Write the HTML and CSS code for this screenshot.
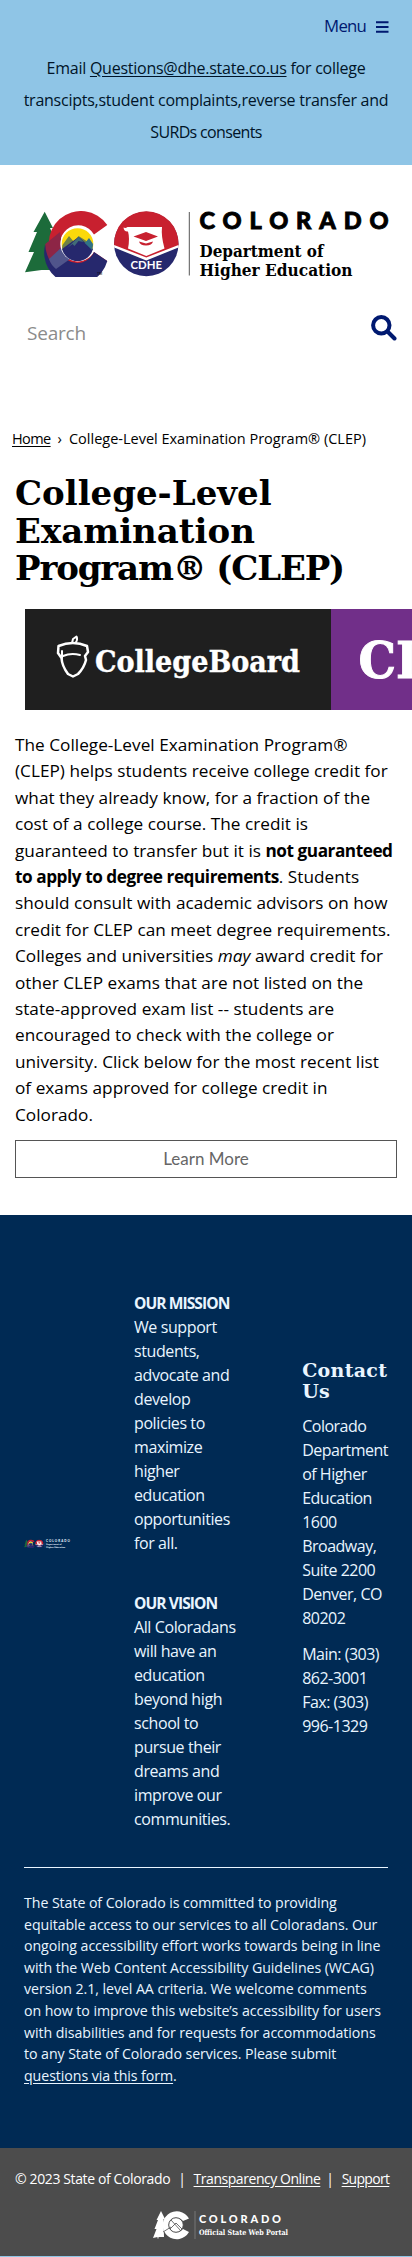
FILE: index.html
```html
<!DOCTYPE html>
<html lang="en">
<head>
<meta charset="utf-8">
<meta name="viewport" content="width=device-width, initial-scale=1">
<title>College-Level Examination Program® (CLEP)</title>
<link rel="stylesheet" href="styles.css">
</head>
<body>
<header class="notice">
  <div class="menu">Menu
    <svg width="13" height="12" viewBox="0 0 13 12"><path d="M0 1.3h12.5M0 6h12.5M0 10.7h12.5" stroke="#001970" stroke-width="2"/></svg>
  </div>
  <p class="notice-text">Email <a href="#">Questions@dhe.state.co.us</a> for college<br>transcipts,student complaints,reverse transfer and<br><span class="narrow">SURDs consents</span></p>
</header>

<section class="brand">
  <svg class="logo" width="366" height="70" viewBox="0 0 366 70">
    <defs>
      <symbol id="marks" viewBox="0 0 156 66">
        <path d="M20.7 .8 29 17l-3 0 8 18-3 2 6 22-19.500 0 0 3H17.500v-3L1 61.300 10 41H4.500L13 21H9.500z" fill="#1c6b3a"/>
        <path d="M83.300 14A32 32 0 1 0 83.300 50L70 41A18 18 0 1 1 70 23.500z" fill="#c8202f"/>
        <path d="M21.300 33A32 32 0 0 0 83.300 50L70 41A18 18 0 0 1 35.500 35L25 47z" fill="#26286d"/>
        <path d="M21.300 33 36 21 40 45 28 53Q21 43 21.300 33z" fill="#8d2546"/>
        <path d="M25 48 38 36 46 48 32 58Q27 54 25 48z" fill="#50558b"/>
        <circle cx="53.500" cy="33" r="17.200" fill="#fff"/>
        <circle cx="53.500" cy="33" r="15.800" fill="#fbd90b"/>
        <path d="M38.500 34 45 25 50 31 54.500 25 69 34A16 16 0 0 1 38 37z" fill="#6d8145"/>
        <path d="M38 38 54.500 26 69 38A16 16 0 0 1 38 38z" fill="#26286d"/>
        <path d="M54.500 26 61 32 65 27 69 33 68 39z" fill="#317287"/>
        <path d="m43 37 11.500-11 5 5-5-1-4 5-2-2z" fill="#416c78"/>
        <circle cx="122.300" cy="33" r="32.200" fill="#26286d"/>
        <path d="M90.200 35A32.200 32.200 0 1 1 154.400 35L122.300 48.500z" fill="#c8202f"/>
        <path d="M90.100 34 122.300 46.500 154.500 34 154.400 36.500 122.300 49.500 90.200 36.500z" fill="#fff"/>
        <path d="M99.500 16.500q2 1 4-.5h34.500q-1 9 2.500 21.500L122.300 45 104 37.500q2-10 0-17-4 .5-4.500-4z" fill="#fff"/>
        <path d="m109.500 25.500 12.500-4.500 12 4.500-12 4.500zM115 30.500l7 2 7-2q-1 4-7 4t-7-4z" fill="#c8202f"/>
        <text class="cdhe" x="106.500" y="58" textLength="31.500" lengthAdjust="spacingAndGlyphs">CDHE</text>
      </symbol>
    </defs>
    <use href="#marks" width="156" height="66"/>
    <text class="tm" x="73" y="64">TM</text>
    <path d="M165.300 1v63.500" stroke="#555" stroke-width="1"/>
    <text class="state" x="175.500" y="18.300" textLength="189">COLORADO</text>
    <text class="dept" x="175.500" y="45.500" textLength="124" lengthAdjust="spacingAndGlyphs">Department of</text>
    <text class="dept" x="175.500" y="64.700" textLength="153" lengthAdjust="spacingAndGlyphs">Higher Education</text>
  </svg>
  <div class="search">
    <span>Search</span>
    <svg width="26" height="26" viewBox="0 0 26 26"><circle cx="10.300" cy="10.300" r="8.200" fill="none" stroke="#001970" stroke-width="4"/><path d="m16.500 16.500 7 7" stroke="#001970" stroke-width="4" stroke-linecap="round"/></svg>
  </div>
</section>

<main>
  <nav class="crumbs"><a href="#">Home</a><span class="sep">›</span><span>College-Level Examination Program® (CLEP)</span></nav>
  <h1>College-Level<br>Examination<br><span class="tight">Program® (CLEP)</span></h1>
  <svg class="banner" width="387" height="101" viewBox="0 0 387 101">
    <path d="M0 0h306v101H0z" fill="#1f1f1f"/><path d="M306 0h81v101h-81z" fill="#712f89"/>
    <g fill="none" stroke="#fff" stroke-width="2.500" stroke-linejoin="round" stroke-linecap="round">
      <path d="M33.500 37Q48 31 62 37L63 43 60 47 61 51Q59 59 53 65L48 67.500 43 65Q37 57 36.500 49L33 44z"/>
      <path d="M38 47q8-3.500 17-1M37 42v7" stroke-width="2"/>
      <path d="m47 34 1-4 3.500-2.500q1.500 3-1 6.500" stroke-width="2"/>
    </g>
    <text class="board" x="70" y="63" textLength="205" lengthAdjust="spacingAndGlyphs">CollegeBoard</text>
    <text class="clep" x="333.500" y="69" textLength="142" lengthAdjust="spacingAndGlyphs">CLEP</text>
  </svg>
  <p class="intro">The College-Level Examination Program®<br>(CLEP) helps students receive college credit for<br>what they already know, for a fraction of the<br>cost of a college course. The credit is<br>guaranteed to transfer but it is <b>not guaranteed<br>to apply to degree requirements</b>. Students<br>should consult with academic advisors on how<br>credit for CLEP can meet degree requirements.<br>Colleges and universities <i>may</i> award credit for<br>other CLEP exams that are not listed on the<br>state-approved exam list -- students are<br>encouraged to check with the college or<br>university. Click below for the most recent list<br>of exams approved for college credit in<br>Colorado.</p>
  <a class="button" href="#">Learn More</a>
</main>

<footer class="site-footer">
  <div class="columns">
    <svg class="mini" width="46" height="10" viewBox="0 0 366 70">
      <use href="#marks" width="156" height="66"/>
      <path d="M165.300 1v63.500" stroke="#7e92a8" stroke-width="1"/>
      <text class="state light" x="175.500" y="18.300" textLength="189">COLORADO</text>
      <text class="dept light" x="176" y="45.500" textLength="123.500" lengthAdjust="spacingAndGlyphs">Department of</text>
      <text class="dept light" x="176" y="64.700" textLength="152" lengthAdjust="spacingAndGlyphs">Higher Education</text>
    </svg>
    <div class="about">
      <p><b>OUR MISSION</b><br>We support<br>students,<br>advocate and<br>develop<br>policies to<br>maximize<br>higher<br>education<br>opportunities<br>for all.</p>
      <p><b>OUR VISION</b><br>All Coloradans<br>will have an<br>education<br>beyond high<br>school to<br>pursue their<br>dreams and<br>improve our<br>communities.</p>
    </div>
    <div class="contact">
      <h2>Contact<br>Us</h2>
      <p>Colorado<br>Department<br>of Higher<br>Education<br>1600<br>Broadway,<br>Suite 2200<br>Denver, CO<br>80202</p>
      <p>Main: (303)<br>862-3001<br>Fax: (303)<br>996-1329</p>
    </div>
  </div>
  <p class="access">The State of Colorado is committed to providing<br>equitable access to our services to all Coloradans. Our<br>ongoing accessibility effort works towards being in line<br>with the Web Content Accessibility Guidelines (WCAG)<br>version 2.1, level AA criteria. We welcome comments<br>on how to improve this website’s accessibility for users<br>with disabilities and for requests for accommodations<br>to any State of Colorado services. Please submit<br><a href="#">questions via this form</a>.</p>
</footer>

<div class="legal">
  <div class="links"><span>© 2023 State of Colorado</span><span>|</span><a href="#">Transparency Online</a><span>|</span><a class="support" href="#">Support</a></div>
  <svg class="portal" width="136" height="29" viewBox="0 0 136 29">
    <path d="M8 0 12 8 10.500 8 11 26 5.500 26v1.500h-1V26L0 27 3.500 18H1.500L5 9H3.500z" fill="#fff"/>
    <path d="M36 7.500A14 14 0 1 0 36 21L30 18A7 7 0 1 1 30 10z" fill="#fff"/>
    <circle cx="23" cy="14" r="7.300" fill="#fff" stroke="#4c4c4c"/>
    <path d="m17 18 6-6 6 6M18 9l10 11M10 21l8-5" fill="none" stroke="#4c4c4c" stroke-width=".8"/>
    <path d="M42 0v28" stroke="#777"/>
    <text class="portal-state" x="46" y="11.500" textLength="82">COLORADO</text>
    <text class="portal-name" x="46" y="24" textLength="89" lengthAdjust="spacingAndGlyphs">Official State Web Portal</text>
  </svg>
</div>
</body>
</html>
```
FILE: styles.css
```css
* { box-sizing: border-box; }
body {
  margin: 0;
  overflow-x: hidden;
  background: #fff;
  color: #000;
  font-family: "Open Sans", "Noto Sans", sans-serif;
}
p, h1, h2 { margin: 0; }
a { color: inherit; text-underline-offset: 2px; }
svg { display: block; flex: none; }

.notice { height: 165px; padding: 15px 23px 0 23px; background: #8fc5e6; white-space: nowrap; }
.menu {
  display: flex; justify-content: flex-end; align-items: center; gap: 10px;
  height: 20px; color: #001970; font-size: 16.800px; letter-spacing: -.8px;
}
.menu svg { margin-top: 3px; }
.notice-text { margin-top: 17px; color: #001428; font-size: 16px; line-height: 32px; letter-spacing: -.25px; text-align: center; }
.narrow { letter-spacing: -.65px; }

.brand { height: 263px; padding: 46px 15px 0 24px; }
.logo { overflow: visible; }
.search { display: flex; justify-content: space-between; padding: 34px 0 0 3px; color: #8b8b8b; font-size: 19px; line-height: 26px; letter-spacing: -.2px; }
.search span { padding-top: 5px; }

.crumbs { display: flex; height: 20px; padding: 1px 0 0 12px; font-size: 14.500px; line-height: 20px; white-space: nowrap; }
.crumbs a { letter-spacing: -.6px; }
.sep { margin: 0 7px; }
h1 { margin: 27px 0 0 15px; font: bold 34px/37.500px "DejaVu Serif", serif; letter-spacing: 0; white-space: nowrap; }
.tight { letter-spacing: -1.150px; }
.banner { margin: 21.500px 0 0 25px; }
.intro { margin: 22px 0 0 15px; font-size: 17.200px; line-height: 26.400px; letter-spacing: .02px; white-space: nowrap; }
.intro b { letter-spacing: -.45px; }
.button {
  display: block; height: 38px; margin: 12px 15px 37px; border: 1px solid #555;
  color: #666; font: 17px/36px Lato, sans-serif; text-align: center; text-decoration: none;
}

.site-footer { height: 933px; padding: 0 24px; background: #002a54; color: #e9f5ff; font-size: 16px; line-height: 24px; letter-spacing: -.4px; white-space: nowrap; }
.columns { display: flex; height: 653px; border-bottom: 1px solid #e9f5ff; }
.mini { margin-top: 324px; overflow: visible; }
.about { width: 169px; margin-left: 64px; padding-top: 76px; }
.about b { font-size: 15.600px; line-height: 20px; letter-spacing: -.95px; }
.about p + p { margin-top: 36px; }
.contact { padding-top: 145px; }
.contact h2 { font: bold 19px/21px "DejaVu Serif", serif; letter-spacing: .3px; }
.contact p { margin-top: 12px; letter-spacing: -.5px; }
.access { padding-top: 24px; font-size: 14.200px; line-height: 21.600px; letter-spacing: -.07px; }

.legal { height: 109px; padding: 21px 15px 0; background: #4c4c4c; border-bottom: 1px solid #8fc5e6; color: #fff; }
.links { display: flex; gap: 8px; font-size: 14px; line-height: 20px; letter-spacing: -.38px; white-space: nowrap; }
.links a { margin-right: -2px; letter-spacing: -.45px; }
.links .support { letter-spacing: -.7px; }
.portal { margin: 22px 0 0 138px; }

.cdhe { font: bold 11px Lato, sans-serif; fill: #fff; }
.tm { font: 3.500px "Liberation Sans", sans-serif; }
.state { font: 900 23.500px Lato, sans-serif; stroke: #000; stroke-width: .9px; }
.dept { font: bold 16px "DejaVu Serif", serif; }
.light { fill: #e9f5ff; stroke: none; }
.board { font: bold 29px "DejaVu Serif", serif; fill: #fff; stroke: #fff; stroke-width: .4px; }
.clep { font: bold 50px "DejaVu Serif", serif; fill: #fff; stroke: #fff; }
.portal-state { font: 900 11px Lato, sans-serif; fill: #fff; }
.portal-name { font: bold 7.500px "DejaVu Serif", serif; fill: #fff; }
```
